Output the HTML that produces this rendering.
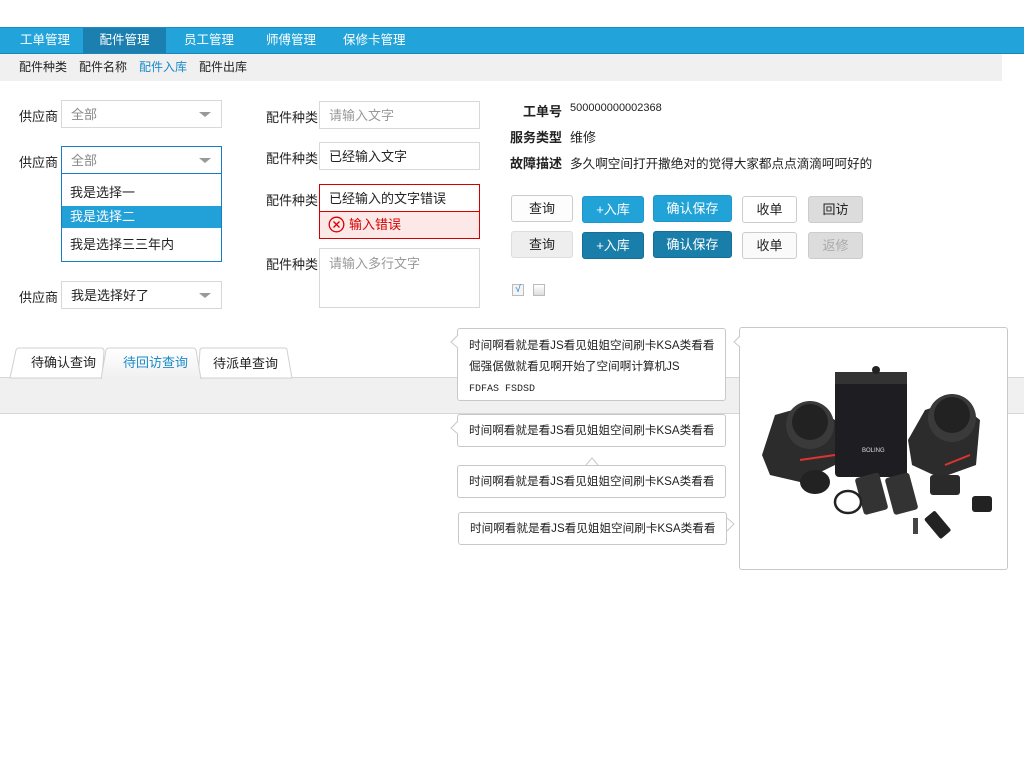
<!DOCTYPE html>
<html><head><meta charset="utf-8"><style>
*{margin:0;padding:0;box-sizing:border-box}
body{width:1024px;height:768px;background:#fff;position:relative;overflow:hidden;font-family:"Liberation Sans","Noto Sans CJK SC",sans-serif;font-size:12px;color:#222}
.a{position:absolute;white-space:nowrap}
.nav{left:0;top:27px;width:1024px;height:27px;background:#22a3d9;border-top:1px solid #1b8fc4;border-bottom:1px solid #1a86b8}
.nav span{position:absolute;top:0;height:25px;line-height:25px;color:#fff;font-size:12.5px}
.sub{left:0;top:54px;width:1002px;height:27px;background:#f0f0f0}
.sub span{position:absolute;top:0;line-height:27px;font-size:12px;color:#222}
.sel{background:#fff;border:1px solid #d8d8d8;height:28px;line-height:27px;padding-left:9px;color:#888;font-size:13px}
.sel i{position:absolute;right:10px;top:11px;width:0;height:0;border-left:6px solid transparent;border-right:6px solid transparent;border-top:5px solid #999}
.inp{border:1px solid #d8d8d8;height:28px;line-height:28px;padding-left:9px;font-size:13px;background:#fff}
.lbl{font-size:13px}
.btn{height:27px;line-height:25px;text-align:center;border:1px solid #ccc;border-radius:3px;font-size:13px}
.tip{background:#fff;border:1px solid #c8c8c8;border-radius:3px;font-size:11.6px;padding-left:11px;line-height:21px}
.tab{top:348px;height:30px;line-height:28px;font-size:13px;text-align:center}
</style></head><body>
<div class="a nav">
<span style="left:20px">工单管理</span>
<span style="left:83px;width:83px;background:#1b7fb0;text-align:center">配件管理</span>
<span style="left:184px">员工管理</span>
<span style="left:266px">师傅管理</span>
<span style="left:343px">保修卡管理</span>
</div>
<div class="a sub">
<span style="left:19px">配件种类</span><span style="left:79px">配件名称</span><span style="left:139px;color:#1a8bc9">配件入库</span><span style="left:199px">配件出库</span>
</div>

<div class="a lbl" style="left:19px;top:106px">供应商</div>
<div class="a sel" style="left:61px;top:100px;width:161px">全部<i></i></div>
<div class="a lbl" style="left:19px;top:152px">供应商</div>
<div class="a sel" style="left:61px;top:146px;width:161px;border-color:#1a7cc0">全部<i></i></div>
<div class="a" style="left:61px;top:173px;width:161px;height:89px;border:1px solid #1a7cc0;border-top:none;background:#fff;font-size:13px">
<div style="position:absolute;left:0;top:0;width:159px;border-top:1px solid #1a7cc0"></div>
<div style="position:absolute;left:8px;top:9px">我是选择一</div>
<div style="position:absolute;left:0;top:33px;width:159px;height:22px;line-height:22px;background:#22a0d8;color:#fff;padding-left:8px">我是选择二</div>
<div style="position:absolute;left:8px;top:61px">我是选择三三年内</div>
</div>
<div class="a lbl" style="left:19px;top:287px">供应商</div>
<div class="a sel" style="left:61px;top:281px;width:161px;color:#222">我是选择好了<i></i></div>

<div class="a lbl" style="left:266px;top:107px">配件种类</div>
<div class="a inp" style="left:319px;top:101px;width:161px;color:#999">请输入文字</div>
<div class="a lbl" style="left:266px;top:148px">配件种类</div>
<div class="a inp" style="left:319px;top:142px;width:161px">已经输入文字</div>
<div class="a lbl" style="left:266px;top:190px">配件种类</div>
<div class="a inp" style="left:319px;top:184px;width:161px;border-color:#d40000;height:55px;line-height:27px">已经输入的文字错误
<div style="position:absolute;left:0;top:26px;width:159px;height:27px;background:#fde8e8;border-top:1px solid #d40000;color:#d40000;padding-left:29px;line-height:26px">输入错误
<svg style="position:absolute;left:8px;top:4px" width="17" height="17" viewBox="0 0 17 17"><circle cx="8.5" cy="8.5" r="7.3" fill="none" stroke="#d40000" stroke-width="1.3"/><path d="M5.5 5.5L11.5 11.5M11.5 5.5L5.5 11.5" stroke="#d40000" stroke-width="1.3"/></svg></div></div>
<div class="a lbl" style="left:266px;top:254px">配件种类</div>
<div class="a inp" style="left:319px;top:248px;width:161px;height:60px;line-height:30px;color:#999">请输入多行文字</div>

<div class="a" style="left:523px;top:101px;font-weight:bold;font-size:13px">工单号</div>
<div class="a" style="left:570px;top:102px;font-size:11px">500000000002368</div>
<div class="a" style="left:510px;top:127px;font-weight:bold;font-size:13px">服务类型</div>
<div class="a" style="left:570px;top:127px;font-size:13px">维修</div>
<div class="a" style="left:510px;top:153px;font-weight:bold;font-size:13px">故障描述</div>
<div class="a" style="left:570px;top:153px;font-size:12.6px">多久啊空间打开撒绝对的觉得大家都点点滴滴呵呵好的</div>

<div class="a btn" style="left:511px;top:195px;width:62px;background:#fdfdfd">查询</div>
<div class="a btn" style="left:582px;top:196px;width:62px;background:#22a3d8;border-color:#1f97cc;color:#fff">+入库</div>
<div class="a btn" style="left:653px;top:195px;width:79px;background:#22a3d8;border-color:#1f97cc;color:#fff">确认保存</div>
<div class="a btn" style="left:742px;top:196px;width:55px;background:#fff">收单</div>
<div class="a btn" style="left:808px;top:196px;width:55px;background:#dcdcdc">回访</div>
<div class="a btn" style="left:511px;top:231px;width:62px;background:#eee;border-color:#ddd">查询</div>
<div class="a btn" style="left:582px;top:232px;width:62px;background:#1a7eab;border-color:#166d96;color:#fff">+入库</div>
<div class="a btn" style="left:653px;top:231px;width:79px;background:#1a7eab;border-color:#166d96;color:#fff">确认保存</div>
<div class="a btn" style="left:742px;top:232px;width:55px;background:#fafafa">收单</div>
<div class="a btn" style="left:808px;top:232px;width:55px;background:#dcdcdc;color:#aaa">返修</div>
<div class="a" style="left:512px;top:284px;width:12px;height:12px;border:1px solid #bbb;background:#f4f4f4;color:#1a7cc0;font-size:10px;line-height:10px;text-align:center">√</div>
<div class="a" style="left:533px;top:284px;width:12px;height:12px;border:1px solid #bbb;background:linear-gradient(#fff,#ddd)"></div>

<div class="a" style="left:0;top:377px;width:1024px;height:37px;background:#f0f0f0;border-top:1px solid #d6d6d6;border-bottom:1px solid #d6d6d6"></div>
<svg class="a" style="left:0;top:345px" width="300" height="34"><path d="M10 33L16 5Q17 3 19 3H101Q104 3 104 6L102 33Z" fill="#fff" stroke="#d0d0d0"/><path d="M198 33L200 5Q200 3 203 3H285Q287 3 287 5L292 33Z" fill="#fff" stroke="#d0d0d0"/><defs><linearGradient id="g" x1="0" y1="0" x2="0" y2="1"><stop offset="0" stop-color="#fff"/><stop offset="1" stop-color="#f0f0f0"/></linearGradient></defs><path d="M101 34L106 5Q107 3 109 3H193Q195 3 196 5L201 34Z" fill="url(#g)" stroke="#d0d0d0"/><path d="M102 33.5H200" stroke="#f0f0f0" stroke-width="2"/></svg>
<div class="a tab" style="left:31px;top:349px">待确认查询</div>
<div class="a tab" style="left:123px;top:349px;color:#1a8bc9">待回访查询</div>
<div class="a tab" style="left:213px;top:350px">待派单查询</div>

<div class="a tip" style="left:457px;top:328px;width:269px;height:73px;padding-top:6px;white-space:normal;line-height:21px">时间啊看就是看JS看见姐姐空间刷卡KSA类看看<br>倔强倨傲就看见啊开始了空间啊计算机JS<br><span style="font-family:'Liberation Mono',monospace;font-size:10px">FDFAS FSDSD</span></div>
<div class="a tip" style="left:457px;top:414px;width:269px;height:33px;line-height:31px">时间啊看就是看JS看见姐姐空间刷卡KSA类看看</div>
<div class="a tip" style="left:457px;top:465px;width:269px;height:33px;line-height:31px">时间啊看就是看JS看见姐姐空间刷卡KSA类看看</div>
<div class="a tip" style="left:458px;top:512px;width:269px;height:33px;line-height:31px">时间啊看就是看JS看见姐姐空间刷卡KSA类看看</div>
<svg class="a" style="left:446px;top:330px" width="300" height="210"><g fill="#fff" stroke="#c8c8c8"><path d="M12 5L5 12L12 18"/><path d="M12 91L5 98L12 104"/><path d="M140 135L146 128L152 135"/><path d="M281 188L288 194L281 201"/></g></svg>
<div class="a" style="left:739px;top:327px;width:269px;height:243px;border:1px solid #c8c8c8;border-radius:3px;background:#fff"></div>
<svg class="a" style="left:733px;top:330px" width="12" height="20"><path d="M7 6L1 12L7 17" fill="#fff" stroke="#c8c8c8"/></svg>
<svg class="a" style="left:740px;top:360px" width="260" height="180">
<rect x="95" y="12" width="72" height="105" rx="4" fill="#1e1e22"/><rect x="95" y="12" width="72" height="12" fill="#333"/>
<circle cx="136" cy="10" r="4" fill="#222"/>
<text x="122" y="92" font-size="6" fill="#ddd" font-family="Liberation Sans">BOLING</text>
<path d="M22 95L35 55L70 45L95 60L95 105L60 122L30 115Z" fill="#2c2c2c"/><circle cx="70" cy="65" r="24" fill="#3a3a3a"/><circle cx="70" cy="62" r="18" fill="#222"/>
<path d="M168 80L185 50L215 40L240 60L236 105L200 118L172 105Z" fill="#2c2c2c"/><circle cx="212" cy="58" r="24" fill="#3a3a3a"/><circle cx="212" cy="55" r="18" fill="#222"/>
<path d="M60 100L95 95" stroke="#d33" stroke-width="2"/><path d="M205 105L230 95" stroke="#d33" stroke-width="2"/>
<ellipse cx="75" cy="122" rx="15" ry="12" fill="#222"/>
<rect x="118" y="115" width="25" height="38" rx="3" fill="#333" transform="rotate(-15 130 130)"/>
<rect x="148" y="115" width="25" height="38" rx="3" fill="#333" transform="rotate(-15 160 130)"/>
<rect x="190" y="115" width="30" height="20" rx="3" fill="#2a2a2a"/>
<ellipse cx="108" cy="142" rx="13" ry="11" fill="none" stroke="#222" stroke-width="2.5"/>
<rect x="190" y="152" width="14" height="26" rx="2" fill="#222" transform="rotate(-40 197 164)"/>
<rect x="232" y="136" width="20" height="16" rx="3" fill="#222"/>
<rect x="173" y="158" width="5" height="16" fill="#444"/>
</svg>
</body></html>
